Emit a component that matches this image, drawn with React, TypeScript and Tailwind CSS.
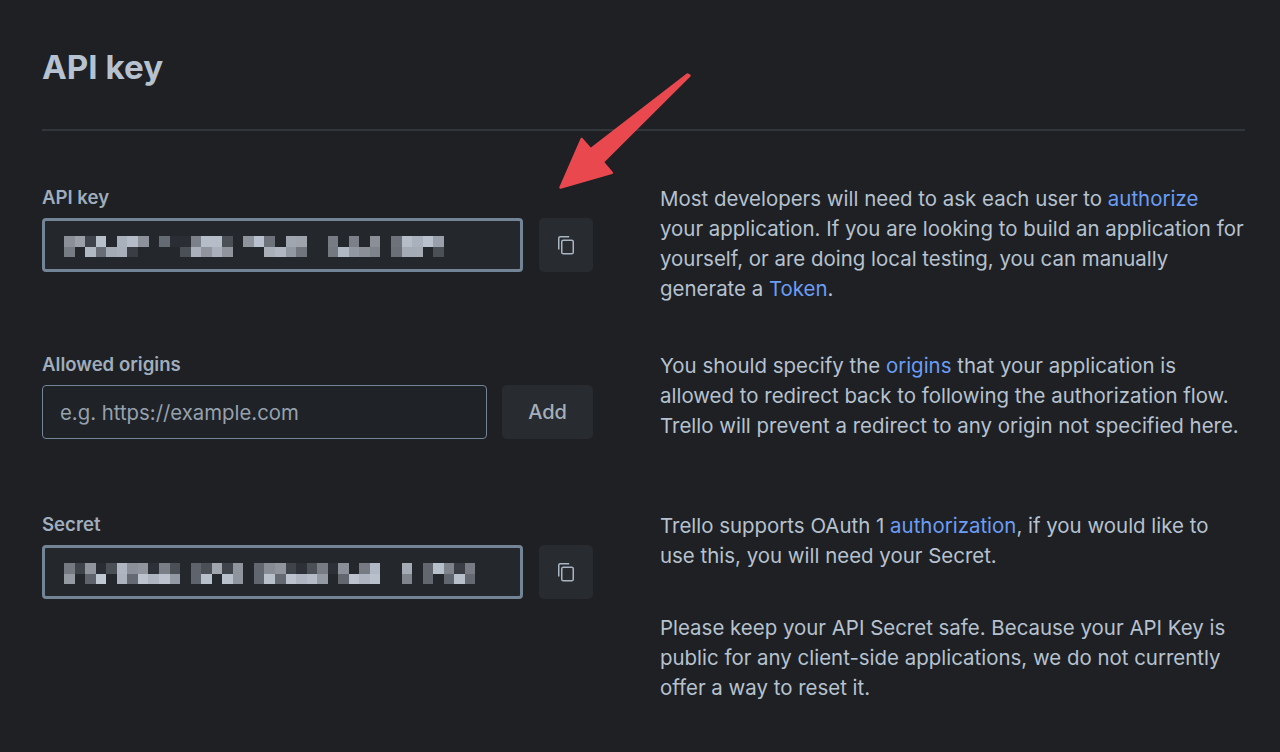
const FONT = "font-['Inter','Liberation_Sans',sans-serif]";

// pixelated key values, one colour per 10.55px cell ("" = nothing there)
const KEY_CELLS = [
  ["#8a8f98", "#9a9fa8", "#3f444b", "#b8c0cc", "", "#a9b1bd", "#b5bcc8", "#8d929a", "", "#656b73", "#2a2d33", "#2a2d33", "#7b8089", "#b5bdc9", "#b5bdc9", "#4b5057", "", "#8f949c", "#b8c1cd", "#6e737b", "", "#a0a6af", "#9ea3ac", "", "", "#777c84", "", "#7b8089", "", "#8a8f98", "", "#6e737b", "#b5bdc9", "#a9b1bd", "#b8c1cd", "#9aa0a9"],
  ["#777c84", "", "#b0b8c4", "#686d75", "#a5abb5", "#a9afba", "#3a3e44", "", "", "", "", "#4b5057", "#aab1bc", "#8f949d", "#a9b0bb", "#8f949d", "", "", "", "#a8afb9", "#b0b7c2", "#9298a1", "#71767e", "", "", "#747981", "#b0b8c4", "#9298a1", "#8a8f98", "#7f848c", "", "#6b7078", "#a5abb5", "#a5abb5", "", "#4b5057"],
];

const SECRET_CELLS = [
  ["#757a82", "#3f434a", "#8f949d", "#2a2d33", "#4b5057", "#b0b6c1", "#8a8f98", "#8f949d", "#2d3036", "#7a7f87", "#4b5057", "", "#5f646c", "#4b5057", "#a0a5ae", "#3f434a", "#8f949d", "", "#62676f", "#888d95", "#8f949d", "#3f434a", "#2d3036", "#4b5057", "#777c84", "#2d3036", "#8a8f98", "", "#767b83", "#b0b8c4", "", "", "#a5abb5", "", "#62676f", "#b8c0cc", "#7f848c", "#3a3e44", "#777c84"],
  ["#9499a2", "", "#5f646c", "#c0c8d4", "", "#adb3be", "#656a72", "#bcc3cf", "#afb5c0", "#bcc3cf", "#949aa3", "", "#5f646c", "#b8c0cc", "", "#b8c0cc", "#8f949d", "", "#62676f", "#b8c0cc", "#656a72", "#bcc3cf", "#b0b6c1", "#b5bcc8", "#949aa3", "", "#62676f", "#bcc3cf", "#afb5c0", "#b8c0cc", "", "", "#80858d", "", "#62676f", "", "#62676f", "#b8c0cc", "#656a72"],
];

function Mosaic({ rows }: { rows: string[][] }) {
  return (
    <svg width="412" height="21.2" viewBox="0 0 412 21.2" shapeRendering="crispEdges">
      {rows.map((row, y) =>
        row.map((fill, x) =>
          fill ? <rect key={`${y}-${x}`} x={x * 10.55} y={y * 10.6} width="10.6" height="10.6" fill={fill} /> : null
        )
      )}
    </svg>
  );
}

function CopyIcon() {
  return (
    <svg width="18" height="20" viewBox="0 0 18 20" fill="none" stroke="#aab5c2" strokeWidth="1.5">
      <path d="M1.75 14.5V3.2C1.75 2.3 2.4 1.7 3.2 1.7H12.2" />
      <rect x="4.75" y="5.25" width="11.5" height="13.5" rx="1.6" />
    </svg>
  );
}

function SecretField({ label, rows }: { label: string; rows: string[][] }) {
  return (
    <div className="w-[551px] shrink-0">
      <div className="h-[30px] mb-[6px] text-[18.6px] leading-[30px] font-semibold text-[#9fadbc]">{label}</div>
      <div className="flex gap-4">
        <div className="w-[481px] h-[54px] flex items-center pl-[19px] pt-[4px] rounded-[4px] border-[3px] border-[#738496] bg-[#24272c]">
          <Mosaic rows={rows} />
        </div>
        <button className="w-[54px] h-[54px] flex items-center justify-center rounded-[5px] bg-[#282b30]">
          <CopyIcon />
        </button>
      </div>
    </div>
  );
}

function A({ children }: { children: string }) {
  return <a className="text-[#6b9df5]">{children}</a>;
}

export default function App() {
  return (
    <div className={`relative min-h-[752px] overflow-hidden bg-[#1e2024] pl-[42px] pr-[35px] ${FONT}`}>
      <h1 className="pt-[44px] h-[129px] text-[33.2px] leading-[46px] font-bold text-[#b6c2cf]">API key</h1>
      <div className="h-[2px] bg-[#31363c]" />

      <section className="flex gap-[67px] mt-[51px] mb-[45px] text-[20.45px] leading-[30px] text-[#b6c2cf]">
        <SecretField label="API key" rows={KEY_CELLS} />
        <p className="pt-[2px]">
          Most developers will need to ask each user to <A>authorize</A> your application. If you are looking to build an application for yourself, or are doing local testing, you can manually generate a <A>Token</A>.
        </p>
      </section>

      <section className="flex gap-[67px] mb-[68px] text-[20.45px] leading-[30px] text-[#b6c2cf]">
        <div className="w-[551px] shrink-0">
          <div className="h-[30px] mb-[6px] text-[18.6px] leading-[30px] font-semibold text-[#9fadbc]">Allowed origins</div>
          <div className="flex gap-[15px]">
            <input
              placeholder="e.g. https://example.com"
              className="w-[445px] h-[54px] px-[17px] rounded-[4px] border-[1.5px] border-[#738496] bg-[#1f2227] text-[20.35px] outline-none placeholder:text-[#96a1ae]"
            />
            <button className="w-[91px] h-[54px] rounded-[5px] bg-[#282b30] text-[20px] font-medium text-[#a3afbc]">Add</button>
          </div>
        </div>
        <p className="pt-[2px]">
          You should specify the <A>origins</A> that your application is allowed to redirect back to following the authorization flow. Trello will prevent a redirect to any origin not specified here.
        </p>
      </section>

      <section className="flex gap-[67px] text-[20.45px] leading-[30px] text-[#b6c2cf]">
        <SecretField label="Secret" rows={SECRET_CELLS} />
        <div className="pt-[2px]">
          <p>
            Trello supports OAuth 1 <A>authorization</A>, if you would like to use this, you will need your Secret.
          </p>
          <p className="mt-[42px]">
            Please keep your API Secret safe. Because your API Key is public for any client-side applications, we do not currently offer a way to reset it.
          </p>
        </div>
      </section>

      {/* annotation arrow drawn over the page */}
      <svg className="absolute left-0 top-0 pointer-events-none" width="1280" height="752" fill="none">
        <path
          d="M689.5 75.5 L602.7 162 L611.8 172.8 L560.5 187.5 L581.7 139 L590.7 149.3 L687.5 74.5 Z"
          fill="#e9484e"
          stroke="#e9484e"
          strokeWidth="2.5"
          strokeLinejoin="round"
        />
      </svg>
    </div>
  );
}
